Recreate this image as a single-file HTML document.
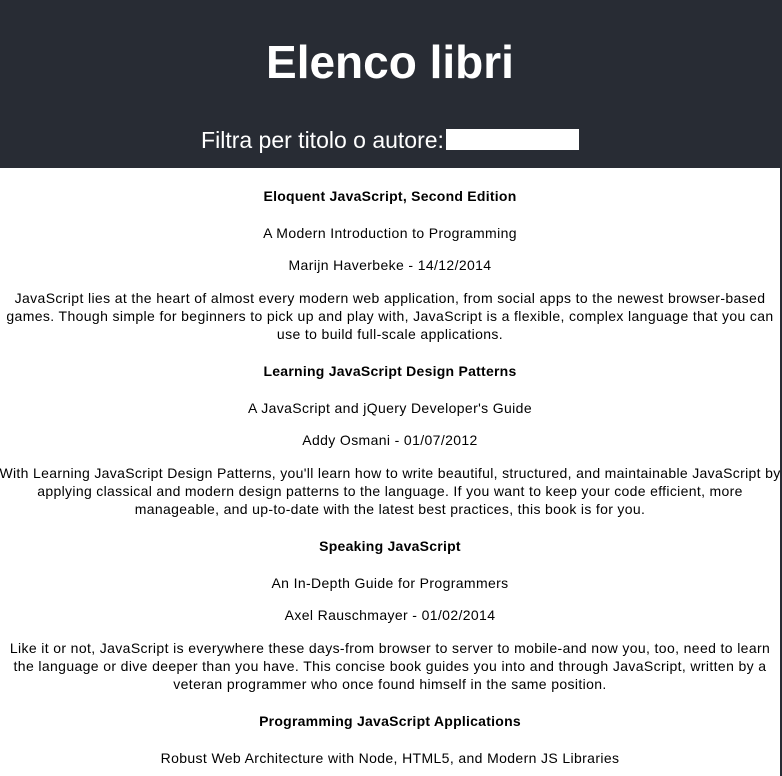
<!DOCTYPE html>
<html><head><meta charset="utf-8"><style>
html,body{margin:0;padding:0;background:#fff;}
body{width:782px;height:776px;overflow:hidden;position:relative;font-family:"Liberation Sans",Arial,sans-serif;color:#000;}
.strip{position:absolute;right:0;top:0;width:2px;height:776px;background:#282c34;}
.wrap{width:780px;text-align:center;font-size:14px;line-height:18px;}
header{background:#282c34;height:168px;color:#fff;position:relative;}
h1{margin:0;position:absolute;top:35px;left:0;width:780px;font-size:46px;line-height:54px;font-weight:bold;}
.filter{position:absolute;top:124px;left:0;width:780px;font-size:23px;line-height:28px;}
.filter span{display:inline-block;vertical-align:middle;}
.inp{display:inline-block;width:133px;height:21px;background:#fff;vertical-align:middle;margin-left:2px;}
h4{margin:18.5px 0 19.5px;font-size:14px;line-height:18px;letter-spacing:0.25px;}
p{margin:14px 0;letter-spacing:0.37px;}
p.d{margin-top:15px;}
p.w{letter-spacing:0.33px;margin-left:-3px;margin-right:-3px;}
</style></head><body>
<div class="wrap">
<header><h1>Elenco libri</h1><div class="filter"><span>Filtra per titolo o autore:</span><span class="inp"></span></div></header>
<h4>Eloquent JavaScript, Second Edition</h4>
<p>A Modern Introduction to Programming</p>
<p>Marijn Haverbeke - 14/12/2014</p>
<p class="d">JavaScript lies at the heart of almost every modern web application, from social apps to the newest browser-based games. Though simple for beginners to pick up and play with, JavaScript is a flexible, complex language that you can use to build full-scale applications.</p>
<h4>Learning JavaScript Design Patterns</h4>
<p>A JavaScript and jQuery Developer's Guide</p>
<p>Addy Osmani - 01/07/2012</p>
<p class="d w">With Learning JavaScript Design Patterns, you'll learn how to write beautiful, structured, and maintainable JavaScript by<br>applying classical and modern design patterns to the language. If you want to keep your code efficient, more<br>manageable, and up-to-date with the latest best practices, this book is for you.</p>
<h4>Speaking JavaScript</h4>
<p>An In-Depth Guide for Programmers</p>
<p>Axel Rauschmayer - 01/02/2014</p>
<p class="d">Like it or not, JavaScript is everywhere these days-from browser to server to mobile-and now you, too, need to learn the language or dive deeper than you have. This concise book guides you into and through JavaScript, written by a veteran programmer who once found himself in the same position.</p>
<h4>Programming JavaScript Applications</h4>
<p>Robust Web Architecture with Node, HTML5, and Modern JS Libraries</p>
</div>
<div class="strip"></div>
</body></html>
